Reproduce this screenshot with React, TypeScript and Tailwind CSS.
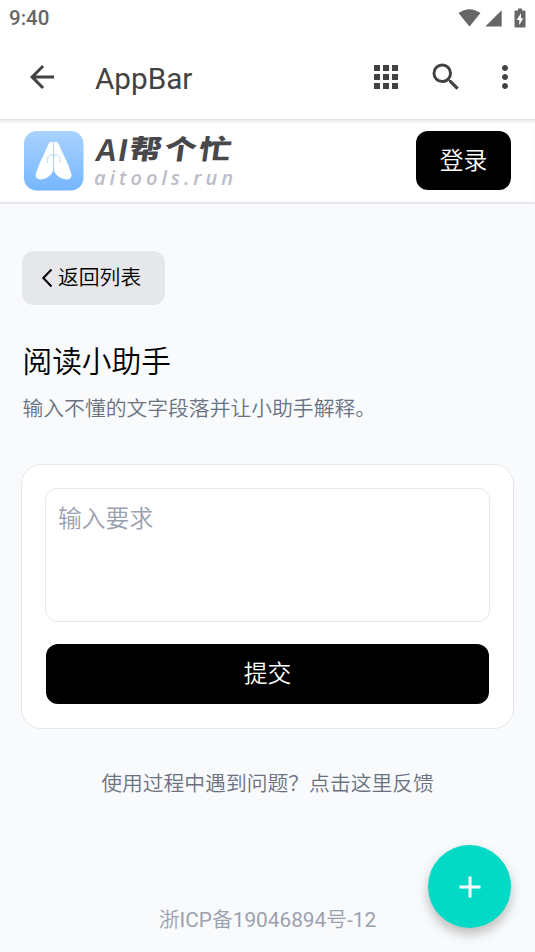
import { MdAdd, MdApps, MdArrowBack, MdMoreVert, MdSearch } from 'react-icons/md';

function StatusBar() {
  return (
    <div className="flex h-9 items-center justify-between pl-[9px] pr-[9px] text-[#666]">
      <span className="pt-px text-[20.5px] font-medium leading-none">9:40</span>
      <div className="flex items-center">
        <svg className="h-[18px] w-[23px]" viewBox="0 0 23 18" fill="currentColor">
          <path d="M0.5 4Q11.5 -3.6 22.5 4L11.5 17.5Z" />
        </svg>
        <svg className="ml-1 h-[18px] w-[17px]" viewBox="0 0 17 18" fill="currentColor">
          <path d="M0.3 17.5L16.7 1.2V17.5Z" />
        </svg>
        <svg className="ml-[12px] h-5 w-[12px]" viewBox="0 0 12 20" fill="currentColor">
          <path
            fillRule="evenodd"
            d="M4 0.5H8V2.5H10.5Q11.5 2.5 11.5 3.5V18.5Q11.5 19.5 10.5 19.5H1.5Q0.5 19.5 0.5 18.5V3.5Q0.5 2.5 1.5 2.5H4ZM7 5.2L2.7 12H5.2V17L9.4 10.2H7Z"
          />
        </svg>
      </div>
    </div>
  );
}

function AppBar() {
  return (
    <div className="flex h-[84px] items-center border-b border-[#dedede] pl-6 text-[#424242]">
      <MdArrowBack className="-mt-px size-9 shrink-0" />
      <h1 className="ml-[35px] flex-1 pt-[2px] text-[29.7px] leading-none">AppBar</h1>
      <MdApps className="-mt-px size-9" />
      <MdSearch className="-mt-px ml-[24px] size-9" />
      <MdMoreVert className="-mt-px ml-[23px] mr-[12px] size-9" />
    </div>
  );
}

function Logo() {
  return (
    <svg className="h-[60px] w-[212px] overflow-visible" viewBox="0 0 212 60">
      <defs>
        <linearGradient id="tile" x1="0" y1="0" x2="0" y2="1">
          <stop offset="0" stopColor="#a9d2ff" />
          <stop offset="1" stopColor="#75b7ff" />
        </linearGradient>
      </defs>
      <rect width="59.5" height="59.5" rx="12.5" fill="url(#tile)" />
      <path
        fill="#fff"
        d="M29.4 12C28.6 10.2 25.6 10.2 24.6 13C20.6 23 15 32 11.9 42.5C10.6 47.5 15 49.3 19.5 48C26.5 46 29.4 41.5 29.4 36Z"
      />
      <path
        fill="#fff"
        d="M29.8 12C30.6 10.2 33.6 10.2 34.6 13C38.6 23 44.2 32 47.3 42.5C48.6 47.5 44.2 49.3 39.7 48C32.7 46 29.8 41.5 29.8 36Z"
      />
      <path
        fill="none"
        stroke="#a3ccf7"
        strokeWidth="0.7"
        d="M29.6 12V42M23.4 32C22.8 27.5 24 24 27.4 23.5Q29.6 23.3 29.6 26Q29.6 23.3 31.8 23.5C35.2 24 36.4 27.5 35.8 32"
      />
      <g fill="#48484c" className="font-['Liberation_Sans',sans-serif] font-bold">
        <text transform="translate(70 30) skewX(-10) scale(0.95 1)" fontSize="31.5">
          A
        </text>
        <text transform="translate(93 30) skewX(-10)" fontSize="31.5">
          I
        </text>
      </g>
      <g fill="#48484c" className="font-['Noto_Sans_CJK_SC',sans-serif] font-black">
        <text transform="translate(104.5 28) skewX(-8) scale(1.18 1)" fontSize="27">
          帮
        </text>
        <text transform="translate(139.5 28) skewX(-8) scale(1.18 1)" fontSize="27">
          个
        </text>
        <text transform="translate(174 28) skewX(-8) scale(1.18 1)" fontSize="27">
          忙
        </text>
      </g>
      <text
        x="70"
        y="54"
        fontSize="20"
        fill="#bcbcc8"
        textLength="139"
        className="font-['Open_Sans',sans-serif] font-semibold italic"
      >
        aitools.run
      </text>
    </svg>
  );
}

function SiteHeader() {
  return (
    <header className="flex h-[84px] items-start justify-between border-b-2 border-gray-200 bg-white px-6 pt-[11px] shadow-[inset_0_3px_3px_-1px_#ececec]">
      <Logo />
      <button className="h-[59px] w-[95px] rounded-xl bg-black pt-[2px] text-[23.8px] leading-none text-white">登录</button>
    </header>
  );
}

export default function App() {
  return (
    <div className="relative flex h-[952px] w-[535px] flex-col overflow-hidden bg-white font-[Roboto,'Noto_Sans_CJK_SC_DemiLight','Noto_Sans_CJK_SC_Light','Noto_Sans_CJK_SC',sans-serif]">
      <StatusBar />
      <AppBar />
      <SiteHeader />
      <main className="flex flex-1 flex-col bg-gray-50 px-[21px] pt-[47px]">
        <button className="ml-px flex h-[54px] w-[143px] items-center rounded-xl bg-gray-200 pl-[17px] text-[20.8px] leading-none text-black">
          <svg className="mr-px h-6 w-[18px]" viewBox="0 0 18 24" fill="none" stroke="currentColor" strokeWidth="2">
            <path d="M12.5 3.5L4.3 12L12.5 20.5" />
          </svg>
          返回列表
        </button>
        <h2 className="mt-[39px] pl-[1.5px] text-[29.7px] leading-9 text-black">阅读小助手</h2>
        <p className="mt-[14px] pl-[1.5px] text-[20.8px] leading-[30px] text-gray-500">
          输入不懂的文字段落并让小助手解释。
        </p>
        <section className="mt-[40px] h-[265px] rounded-[20px] border-[1.5px] border-gray-200 bg-white px-[23px] pt-[23px]">
          <textarea
            className="block h-[134px] w-full resize-none rounded-xl border-[1.5px] border-gray-200 px-[12px] py-[12px] text-[23.8px] leading-9 placeholder:text-gray-400"
            placeholder="输入要求"
          />
          <button className="mx-px mt-[22px] block h-[60px] w-[443px] rounded-xl bg-black pt-[2px] text-[23.8px] leading-none text-white">
            提交
          </button>
        </section>
        <p className="mt-[40px] text-center text-[20.8px] leading-[30px] text-gray-500">
          使用过程中遇到问题？点击这里反馈
        </p>
        <footer className="mt-[106px] text-center text-[20.8px] leading-[30px] text-gray-400">
          浙ICP备19046894号-12
        </footer>
      </main>
      <button className="absolute bottom-6 right-6 flex size-[83px] items-center justify-center rounded-full bg-[#03dac5] text-white shadow-[0_6px_12px_rgba(0,0,0,0.25)]">
        <MdAdd className="size-9" />
      </button>
    </div>
  );
}
